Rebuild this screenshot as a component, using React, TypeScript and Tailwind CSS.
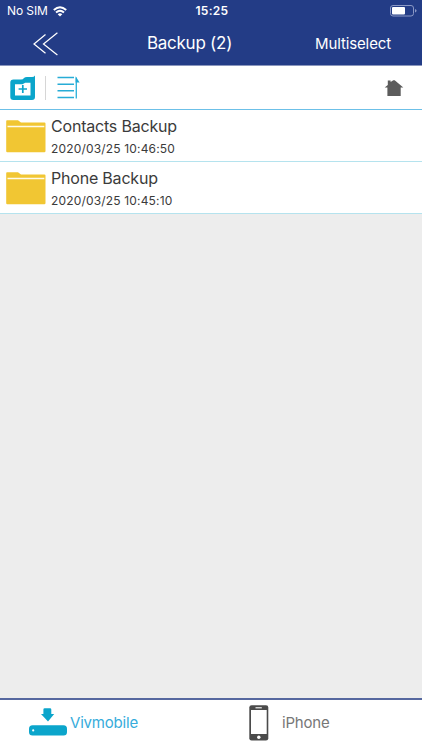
import React from 'react';

interface BackupItem {
  name: string;
  date: string;
}

const backups: BackupItem[] = [
  { name: 'Contacts Backup', date: '2020/03/25 10:46:50' },
  { name: 'Phone Backup', date: '2020/03/25 10:45:10' },
];

const WifiIcon = () => (
  <svg className="w-[14px] h-[11px]" viewBox="0 0 14 11" fill="none" stroke="white" strokeWidth="1.9">
    <path d="M0.8 4 Q7 -1.7 13.2 4" />
    <path d="M3 6.5 Q7 2.8 11 6.5" />
    <path d="M7 10.6 L4.7 8.2 Q7 6.4 9.3 8.2 Z" fill="white" stroke="none" />
  </svg>
);

const BatteryIcon = () => (
  <svg className="w-[27px] h-[12px]" viewBox="0 0 27 12">
    <rect x="0.5" y="0.5" width="23" height="10.5" rx="2.5" fill="none" stroke="#8b98c5" />
    <rect x="2" y="2" width="13" height="7.5" rx="1" fill="white" />
    <path d="M25 4 Q26.6 4.5 26.6 5.8 Q26.6 7 25 7.6 Z" fill="#8b98c5" />
  </svg>
);

const BackIcon = () => (
  <svg className="w-[25px] h-[24px]" viewBox="0 0 25 24" fill="none" stroke="white" strokeWidth="1.25">
    <path d="M12.5 2.5 L1 12 L12.5 21.2" />
    <path d="M24.4 0.8 L10.5 12 L24.4 23" />
  </svg>
);

const AddFolderIcon = () => (
  <svg className="w-[26px] h-[26px]" viewBox="0 0 26 26">
    <path
      d="M3.5 4.5 H11 Q13 4.5 14 3 Q15 2 17 2 H22 Q24 2 25 0.5 V22 Q25 25 22 25 H3.5 Q0.3 25 0.3 22 V7.5 Q0.3 4.5 3.5 4.5 Z"
      fill="#0ba5cb"
    />
    <path d="M5 9.3 H12.5 L15.2 7.8 H20.5 V20.5 H5 Z" fill="white" />
    <path d="M12.8 10 V18 M8.6 14 H17" stroke="#0ba5cb" strokeWidth="1.7" />
  </svg>
);

const SortIcon = () => (
  <svg className="w-[24px] h-[24px]" viewBox="0 0 24 24">
    <path d="M0.5 1.6 H17 M0.5 8.3 H17 M0.5 14.8 H17 M0.5 21.6 H17" stroke="#27acd6" strokeWidth="1.5" />
    <path d="M19.3 22.5 V1.5" stroke="#36b5dc" strokeWidth="1.4" />
    <path d="M18.6 0.3 L22.6 6.4 H18.6 Z" fill="#20a9d4" />
  </svg>
);

const HomeIcon = () => (
  <svg className="w-[20px] h-[17px]" viewBox="0 0 20 17" fill="#5c5c5c">
    <path d="M3.8 5 V0.6 H6.6 V2 L9.3 0.3 Q10 0 10.7 0.3 L19.3 7.6 H16.7 V16 H3.4 V7.6 H0.7 Z" />
  </svg>
);

const FolderIcon = () => (
  <svg className="w-[40px] h-[33px]" viewBox="0 0 40 33">
    <path d="M1 0.3 H12 L15 2.4 H38.5 Q39.5 2.4 39.5 3.5 V31 Q39.5 32.3 38.3 32.3 H1.2 Q0.2 32.3 0.2 31 V1.3 Q0.2 0.3 1 0.3 Z" fill="#f1c633" />
    <path d="M1.5 6.5 H38.3" stroke="#fffbea" strokeWidth="1.6" />
  </svg>
);

const DriveIcon = () => (
  <svg className="w-[38px] h-[28px] mb-[2px]" viewBox="0 0 38 28">
    <path d="M15.7 0.3 H21 Q22.3 0.3 22.3 1.6 V6 H25.2 L19 13.5 L12 6 H14.4 V1.6 Q14.4 0.3 15.7 0.3 Z" fill="#0ba5cb" />
    <rect x="0" y="17.2" width="38" height="10.4" rx="3.5" fill="#0ba5cb" />
    <circle cx="4.2" cy="22.4" r="1.1" fill="white" />
  </svg>
);

const PhoneIcon = () => (
  <svg className="w-[20px] h-[36px] mb-[1px]" viewBox="0 0 20 36">
    <rect x="0.3" y="0.3" width="19" height="35.2" rx="2.3" fill="#4b4b4b" />
    <rect x="2" y="5" width="15.7" height="24" fill="white" />
    <path d="M6.5 2.8 H12.8" stroke="white" strokeWidth="1.1" />
    <circle cx="9.8" cy="32.3" r="1.7" fill="white" />
  </svg>
);

const App: React.FC = () => {
  return (
    <div className="w-full h-[750px] flex flex-col overflow-hidden bg-[#ededed] font-['Inter','Liberation_Sans',sans-serif] text-[#3b3b3b]">
      {/* Status bar + title */}
      <header className="h-[66px] shrink-0 bg-[#233c86] border-b border-[#8a96bd] text-white">
        <div className="h-[22px] grid grid-cols-3 items-center pl-[7px] pr-[5px] text-[12px]">
          <div className="flex items-center gap-[5px]">
            <span className="tracking-[-0.1px]">No SIM</span>
            <WifiIcon />
          </div>
          <span className="text-center font-semibold tracking-[0.3px]">15:25</span>
          <div className="flex justify-end"><BatteryIcon /></div>
        </div>
        <div className="h-[43px] grid grid-cols-[1fr_120px_1fr] items-center">
          <button className="pl-[33px]"><BackIcon /></button>
          <h1 className="text-center text-[17px] tracking-[-0.25px] whitespace-nowrap -ml-[43px] pt-px">Backup (2)</h1>
          <button className="pr-[31px] pt-px text-right text-[15px] tracking-[-0.12px]">Multiselect</button>
        </div>
      </header>

      {/* Toolbar */}
      <div className="h-[44px] shrink-0 flex items-center bg-white border-b border-[#6cc0e8] pl-[10px] pr-[18px] pt-[1px]">
        <AddFolderIcon />
        <div className="w-px h-[24px] bg-[#d6d6d6] ml-[9px] mr-[11px]" />
        <SortIcon />
        <div className="ml-auto"><HomeIcon /></div>
      </div>

      {/* Backup list */}
      <ul>
        {backups.map((item) => (
          <li key={item.name} className="h-[52px] flex bg-white border-b border-[#b5e3ee] pl-[6px]">
            <div className="pt-[10px]"><FolderIcon /></div>
            <div className="pl-[5px] pt-[5px]">
              <p className="text-[16px] leading-[22px] tracking-[-0.2px]">{item.name}</p>
              <p className="text-[12px] leading-[24px] tracking-[0.17px]">{item.date}</p>
            </div>
          </li>
        ))}
      </ul>

      {/* Bottom tabs */}
      <nav className="mt-auto h-[52px] shrink-0 grid grid-cols-2 bg-white border-t-2 border-[#56689f] pb-[4px] text-[15px]">
        <button className="flex items-center gap-[3px] pl-[29px] text-[#36acdb]">
          <DriveIcon />
          <span className="tracking-[-0.2px]">Vivmobile</span>
        </button>
        <button className="flex items-center gap-[13px] pl-[38px] text-[#777777]">
          <PhoneIcon />
          <span className="tracking-[-0.2px]">iPhone</span>
        </button>
      </nav>
    </div>
  );
};

export default App;
